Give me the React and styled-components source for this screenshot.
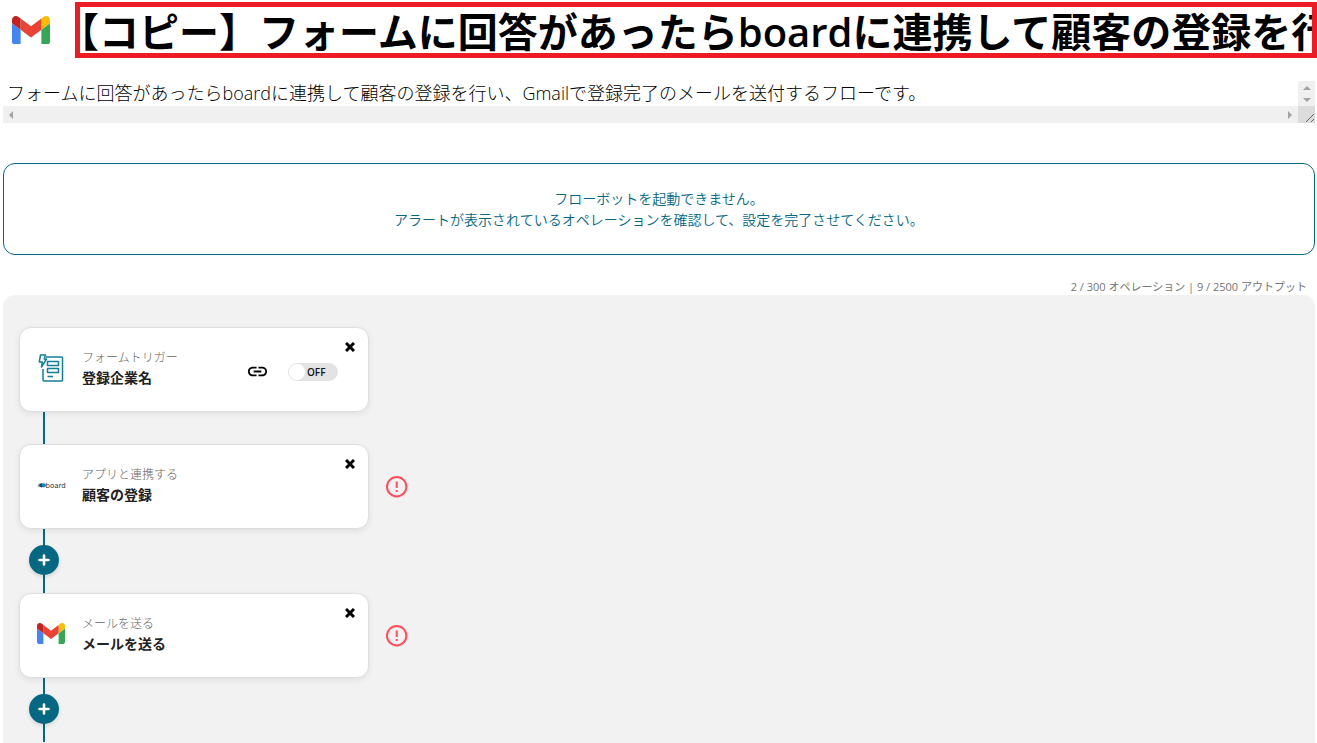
import React, { useState } from 'react'
import styled, { createGlobalStyle } from 'styled-components'

const GlobalStyle = createGlobalStyle`
    * {
        box-sizing: border-box;
    }
    body {
        margin: 0;
        background-color: #fff;
        color: #222;
        font-family: "Open Sans", "Noto Sans CJK JP", sans-serif;
        overflow: hidden;
    }
    button, input, textarea {
        font-family: inherit;
    }
    svg {
        display: block;
    }
`

const Page = styled.main`
    height: 100vh;
    overflow: hidden;
    display: flex;
    flex-direction: column;
`

const Header = styled.header`
    display: flex;
    align-items: center;
    gap: 25px;
    padding: 2px 0 0 12px;
`

const Title = styled.input`
    flex: 1;
    min-width: 0;
    height: 56px;
    padding: 0;
    border: 5px solid #ed1c24;
    outline: none;
    background-color: transparent;
    color: #000;
    font-size: 40px;
    font-weight: 600;
    text-indent: -21px;
`

const Content = styled.div`
    flex: 1;
    min-height: 0;
    display: flex;
    flex-direction: column;
    padding: 23px 2px 0 3px;
`

const Description = styled.div`
    display: grid;
    grid-template-columns: 1fr 17px;
    grid-template-rows: 25px 17px;
`

const DescriptionText = styled.textarea`
    border: none;
    outline: none;
    resize: none;
    overflow: hidden;
    padding: 0 4px;
    background-color: transparent;
    color: #000;
    font-size: 18px;
    font-weight: 300;
    line-height: 25px;
    white-space: pre;
`

const ScrollTrack = styled.div`
    display: flex;
    flex-direction: ${({ $vertical }) => ($vertical ? 'column' : 'row')};
    justify-content: space-between;
    align-items: center;
    padding: ${({ $vertical }) => ($vertical ? '5px 0 4px' : '0 6px')};
    background-color: #f0f0f0;
`

const ResizeCorner = styled.div`
    background-color: #dcdcdc;
`

const Notice = styled.section`
    margin-top: 40px;
    padding: 24px 16px;
    border: 1px solid #056883;
    border-radius: 12px;
    color: #056883;
    font-size: 14px;
    font-weight: 350;
    line-height: 21px;
    text-align: center;

    p {
        margin: 0;
    }
`

const Usage = styled.p`
    margin: 24px 8px 0;
    color: #757575;
    font-size: 11px;
    line-height: 16px;
    text-align: right;
`

const Board = styled.section`
    flex: 1;
    padding: 32px 16px 0;
    border-radius: 12px 12px 0 0;
    background-color: #f2f2f2;
`

const Row = styled.div`
    display: flex;
    align-items: center;
    gap: 17px;
`

const Card = styled.article`
    width: 350px;
    height: 85px;
    display: flex;
    padding: 12px 11px 12px 16px;
    border: 1px solid #dedede;
    border-radius: 12px;
    background-color: #fff;
    box-shadow: 0 2px 6px rgba(0, 0, 0, 0.08);
`

const AppIcon = styled.div`
    width: 30px;
    display: flex;
    align-items: center;
    justify-content: center;
    padding-bottom: 4px;
`

const Texts = styled.div`
    flex: 1;
    padding: 8px 0 0 16px;
`

const Kind = styled.p`
    margin: 0;
    color: #666;
    font-size: 12px;
    font-weight: 300;
    line-height: 20px;
`

const Name = styled.h2`
    margin: 0;
    color: #222;
    font-size: 14px;
    font-weight: 600;
    line-height: 19px;
`

const Controls = styled.div`
    display: flex;
    align-items: center;
    gap: 19px;
    margin-right: 5px;
    padding-top: 4px;
`

const IconButton = styled.button`
    display: flex;
    align-items: center;
    justify-content: center;
    width: ${({ $size }) => $size}px;
    height: ${({ $size }) => $size}px;
    padding: 0;
    border: none;
    background: none;
    color: ${({ $color }) => $color || '#000'};
    cursor: pointer;
`

const Switch = styled.label`
    position: relative;
    display: flex;
    align-items: center;
    width: 50px;
    height: 18px;
    padding: 1px;
    border-radius: 9px;
    background-color: #e3e3e3;
    color: #111;
    font-size: 10px;
    font-weight: 600;
    cursor: pointer;

    input {
        position: absolute;
        inset: 0;
        margin: 0;
        opacity: 0;
        cursor: pointer;
    }
`

const Knob = styled.span`
    width: 16px;
    height: 16px;
    margin-right: 2px;
    border-radius: 50%;
    background-color: #fff;
`

const Connector = styled.div`
    width: 50px;
    height: ${({ $tall }) => ($tall ? 64 : 32)}px;
    display: flex;
    align-items: center;
    justify-content: center;
    padding-bottom: 2px;
    background: linear-gradient(#056883, #056883) center / 2px 100% no-repeat;
`

const AddButton = styled.button`
    display: flex;
    align-items: center;
    justify-content: center;
    width: 30px;
    height: 30px;
    padding: 0;
    border: none;
    border-radius: 50%;
    background-color: #056883;
    box-shadow: 0 2px 4px rgba(0, 0, 0, 0.12);
    cursor: pointer;
`

const GmailIcon = ({ width }) => (
    <svg width={width} viewBox="52 42 88 66" aria-hidden="true">
        <path fill="#4285f4" d="M58 108h14V74L52 59v43c0 3.32 2.69 6 6 6" />
        <path fill="#34a853" d="M120 108h14c3.32 0 6-2.69 6-6V59l-20 15" />
        <path fill="#fbbc04" d="M120 48v26l20-15v-8c0-7.42-8.47-11.65-14.4-7.2" />
        <path fill="#ea4335" d="M72 74V48l24 18 24-18v26L96 92" />
        <path fill="#c5221f" d="M52 51v8l20 15V48l-5.6-4.2c-5.94-4.45-14.4-.22-14.4 7.2" />
    </svg>
)

const FormIcon = () => (
    <svg width="26" height="28" viewBox="0 0 26 28" fill="none" stroke="#137f97" strokeWidth="1.5" strokeLinejoin="round" aria-hidden="true">
        <path d="M8 3h15.500q1 0 1 1v22q0 1-1 1H6q-1 0-1-1V15" />
        <path d="M2.500 1h5L6.200 5H8.500L3.500 13l.8-5H1.300z" />
        <path d="M9.500 7.500h11v4h-11zM9.500 14.500h11v4h-11zM9.500 22.500h5.500" />
    </svg>
)

const BoardLogo = () => (
    <svg width="29" height="8" viewBox="0 0 29 8" aria-hidden="true">
        <circle cx="2.800" cy="4.300" r="1.900" fill="#8d9aa3" />
        <circle cx="4.500" cy="4.300" r="2.100" fill="#15455f" />
        <circle cx="6.800" cy="4.300" r="2.100" fill="#0e8ac8" />
        <text x="8.500" y="6.700" fontSize="7" fill="#333" fontFamily="DejaVu Sans, sans-serif">board</text>
    </svg>
)

const CloseIcon = () => (
    <svg width="10" height="10" viewBox="0 0 10 10" stroke="currentColor" strokeWidth="3" aria-hidden="true">
        <path d="M1 1l8 8M9 1L1 9" />
    </svg>
)

const LinkIcon = () => (
    <svg width="23" height="23" viewBox="0 0 24 24" fill="currentColor" aria-hidden="true">
        <path d="M3.900 12c0-1.710 1.390-3.100 3.100-3.100h4V7H7c-2.760 0-5 2.240-5 5s2.240 5 5 5h4v-1.900H7c-1.710 0-3.100-1.390-3.100-3.100zM8 13h8v-2H8v2zm9-6h-4v1.900h4c1.710 0 3.100 1.390 3.100 3.100s-1.390 3.100-3.100 3.100h-4V17h4c2.760 0 5-2.240 5-5s-2.240-5-5-5z" />
    </svg>
)

const PlusIcon = () => (
    <svg width="12" height="12" viewBox="0 0 12 12" stroke="#fff" strokeWidth="2.600" strokeLinecap="round" aria-hidden="true">
        <path d="M6 1.500v9M1.500 6h9" />
    </svg>
)

const AlertIcon = () => (
    <svg width="22" height="22" viewBox="0 0 22 22" fill="none" stroke="currentColor" strokeWidth="2" aria-hidden="true">
        <circle cx="10.700" cy="10.700" r="9.700" />
        <path d="M10.700 5.500v6.500M10.700 14v2" />
    </svg>
)

const Arrow = ({ d, width, height }) => (
    <svg width={width} height={height} fill="#a3a3a3" aria-hidden="true">
        <path d={d} />
    </svg>
)

const steps = [
    { id: 1, kind: 'フォームトリガー', name: '登録企業名', icon: <FormIcon />, trigger: true },
    { id: 2, kind: 'アプリと連携する', name: '顧客の登録', icon: <BoardLogo />, alert: true },
    { id: 3, kind: 'メールを送る', name: 'メールを送る', icon: <GmailIcon width={28} />, alert: true },
]

const Step = ({ step }) => {
    const [active, setActive] = useState(false)
    return (
        <>
            <Row>
                <Card>
                    <AppIcon>{step.icon}</AppIcon>
                    <Texts>
                        <Kind>{step.kind}</Kind>
                        <Name>{step.name}</Name>
                    </Texts>
                    {step.trigger && (
                        <Controls>
                            <IconButton $size={23} aria-label="リンク"><LinkIcon /></IconButton>
                            <Switch>
                                <input type="checkbox" checked={active} onChange={() => setActive((prev) => !prev)} />
                                <Knob />
                                {active ? 'ON' : 'OFF'}
                            </Switch>
                        </Controls>
                    )}
                    <IconButton $size={14} aria-label="削除"><CloseIcon /></IconButton>
                </Card>
                {step.alert && <IconButton $size={22} $color="#ff4d5e" aria-label="アラート"><AlertIcon /></IconButton>}
            </Row>
            <Connector $tall={!step.trigger}>
                {!step.trigger && <AddButton aria-label="追加"><PlusIcon /></AddButton>}
            </Connector>
        </>
    )
}

const App = () => {
    const [title, setTitle] = useState('【コピー】フォームに回答があったらboardに連携して顧客の登録を行い')
    const [description, setDescription] = useState('フォームに回答があったらboardに連携して顧客の登録を行い、Gmailで登録完了のメールを送付するフローです。')
    return (
        <Page>
            <GlobalStyle />
            <Header>
                <GmailIcon width={38} />
                <Title aria-label="タイトル" value={title} onChange={(e) => setTitle(e.target.value)} />
            </Header>
            <Content>
                <Description>
                    <DescriptionText aria-label="説明" rows={1} value={description} onChange={(e) => setDescription(e.target.value)} />
                    <ScrollTrack $vertical>
                        <Arrow width={8} height={4} d="M0 4l4-4 4 4z" />
                        <Arrow width={8} height={4} d="M0 0l4 4 4-4z" />
                    </ScrollTrack>
                    <ScrollTrack>
                        <Arrow width={4} height={8} d="M4 0L0 4l4 4z" />
                        <Arrow width={4} height={8} d="M0 0l4 4-4 4z" />
                    </ScrollTrack>
                    <ResizeCorner>
                        <svg width="17" height="17" stroke="#666" aria-hidden="true">
                            <path d="M8 16l8-8M13 16l3-3" />
                        </svg>
                    </ResizeCorner>
                </Description>
                <Notice>
                    <p>フローボットを起動できません。</p>
                    <p>アラートが表示されているオペレーションを確認して、設定を完了させてください。</p>
                </Notice>
                <Usage>2 / 300 オペレーション | 9 / 2500 アウトプット</Usage>
                <Board>
                    {steps.map((step) => <Step key={step.id} step={step} />)}
                </Board>
            </Content>
        </Page>
    )
}

export default App
